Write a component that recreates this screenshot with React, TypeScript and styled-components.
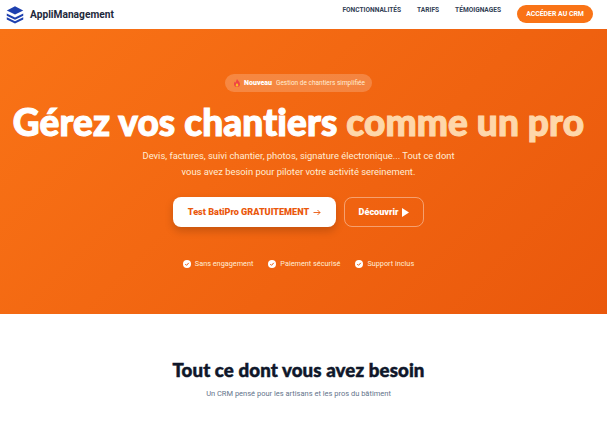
import React from 'react';
import styled, {createGlobalStyle} from 'styled-components';

const Global = createGlobalStyle`
  html, body { margin: 0; padding: 0; background: #fff; overflow: hidden; }
  body { font-family: Roboto, "Open Sans", sans-serif; }
`;

const Nav = styled.header`
  height: 29px;
  display: flex;
  align-items: flex-start;
  justify-content: space-between;
  padding: 0 14px 0 6px;
  background: #fff;
`;

const Brand = styled.div`
  display: flex;
  align-items: center;
  gap: 6px;
  height: 29px;
  font-size: 10.200px;
  font-weight: 700;
  color: #1e293b;
`;

const NavLinks = styled.nav`
  display: flex;
  align-items: flex-start;
  gap: 16px;
`;

const NavLink = styled.a`
  font-size: 6.600px;
  font-weight: 700;
  line-height: 10px;
  margin-top: 5px;
  color: #334155;
`;

const CrmButton = styled.a`
  margin-top: 5px;
  height: 18px;
  width: 76px;
  display: flex;
  align-items: center;
  justify-content: center;
  border-radius: 9px;
  background: #f97316;
  color: #fff;
  font-size: 6.900px;
  font-weight: 700;
`;

const Hero = styled.section`
  height: 285px;
  box-sizing: border-box;
  padding: 45px 10px 0 0;
  display: flex;
  flex-direction: column;
  align-items: center;
  background: linear-gradient(135deg, #f97316, #ea580c);
  color: #fff;
`;

const Badge = styled.div`
  height: 18px;
  padding: 0 7px 0 9px;
  display: flex;
  align-items: center;
  gap: 4px;
  border-radius: 9px;
  background: rgba(255, 255, 255, 0.2);
  font-size: 6.500px;
  color: #ffedd5;
  strong { font-size: 7px; font-weight: 900; color: #fff; }
`;

const Title = styled.h1`
  margin: 5px 0 0;
  font-family: Lato, sans-serif;
  font-size: 37px;
  line-height: 50px;
  font-weight: 900;
  white-space: nowrap;
  letter-spacing: 0.1px;
  -webkit-text-stroke: 1.100px currentColor;
  span { color: #fed7aa; }
`;

const Lead = styled.p`
  margin: 1px 0 0;
  text-align: center;
  font-size: 9.400px;
  line-height: 16px;
  color: #ffedd5;
`;

const Actions = styled.div`
  margin-top: 17px;
  display: flex;
  gap: 8px;
`;

const PrimaryButton = styled.a`
  width: 163px;
  height: 30px;
  display: flex;
  align-items: center;
  justify-content: center;
  gap: 4px;
  border-radius: 8px;
  background: #fff;
  color: #ea580c;
  font-size: 9.100px;
  font-weight: 900;
  box-shadow: 0 4px 8px rgba(0, 0, 0, 0.18);
`;

const GhostButton = styled.a`
  box-sizing: border-box;
  width: 80px;
  height: 30px;
  display: flex;
  align-items: center;
  justify-content: center;
  gap: 3px;
  border-radius: 8px;
  border: 1px solid rgba(255, 255, 255, 0.4);
  font-size: 9.100px;
  font-weight: 900;
`;

const Perks = styled.ul`
  list-style: none;
  margin: 32px 0 0;
  padding: 0;
  display: flex;
  gap: 15px;
`;

const Perk = styled.li`
  display: flex;
  align-items: center;
  gap: 4px;
  font-size: 7.300px;
  color: #ffedd5;
`;

const Features = styled.section`
  padding: 43px 10px 0 0;
  text-align: center;
`;

const FeaturesTitle = styled.h2`
  margin: 0;
  font-family: Lato, sans-serif;
  font-size: 18.700px;
  line-height: 26px;
  font-weight: 900;
  letter-spacing: 0.1px;
  -webkit-text-stroke: 0.5px currentColor;
  color: #0f172a;
`;

const FeaturesLead = styled.p`
  margin: 5px 0 0;
  font-size: 7.500px;
  line-height: 11px;
  color: #64748b;
`;

const Logo = () => (
  <svg width="18" height="19" viewBox="0 0 24 24" fill="#1e40af">
    <path d="M12 1 1 6.500 12 12l11-5.500z" />
    <path d="M1 10.500 12 16l11-5.500v3L12 19 1 13.500z" />
    <path d="M1 15.500 12 21l11-5.500v3L12 24 1 18.500z" />
  </svg>
);

const Check = () => (
  <svg width="8" height="8" viewBox="0 0 16 16">
    <circle cx="8" cy="8" r="8" fill="#fff" />
    <path d="M4.500 8.200 7 10.700l4.500-5" fill="none" stroke="#ea580c" strokeWidth="2" />
  </svg>
);

const Arrow = () => (
  <svg width="8" height="9" viewBox="0 0 16 16" fill="none" stroke="#ea580c" strokeWidth="1.800">
    <path d="M1 8h13M9 3l5 5-5 5" />
  </svg>
);

const Play = () => (
  <svg width="8" height="9" viewBox="0 0 8 9" fill="#fff">
    <path d="M1 0v9l7-4.500z" />
  </svg>
);

const Flame = () => (
  <svg width="6" height="8" viewBox="0 0 6 8">
    <path d="M3 0c.5 1.500 3 2.500 3 5a3 3 0 0 1-6 0c0-1 .5-2 1-2.500 0 1 .5 1 .8 1C2 2.500 2.500 1 3 0z" fill="#ef4444" />
    <path d="M3 4c.3.800 1.300 1.200 1.300 2.200a1.300 1.300 0 0 1-2.600 0C1.700 5.400 2.700 4.800 3 4z" fill="#fbbf24" />
  </svg>
);

export default function App() {
  return (
    <>
      <Global />
      <Nav>
        <Brand>
          <Logo />
          AppliManagement
        </Brand>
        <NavLinks>
          <NavLink>FONCTIONNALITÉS</NavLink>
          <NavLink>TARIFS</NavLink>
          <NavLink>TÉMOIGNAGES</NavLink>
          <CrmButton>ACCÉDER AU CRM</CrmButton>
        </NavLinks>
      </Nav>
      <Hero>
        <Badge>
          <Flame />
          <strong>Nouveau</strong> Gestion de chantiers simplifiée
        </Badge>
        <Title>
          Gérez vos chantiers <span>comme un pro</span>
        </Title>
        <Lead>
          Devis, factures, suivi chantier, photos, signature électronique... Tout ce dont
          <br />
          vous avez besoin pour piloter votre activité sereinement.
        </Lead>
        <Actions>
          <PrimaryButton>
            Test BatiPro GRATUITEMENT <Arrow />
          </PrimaryButton>
          <GhostButton>
            Découvrir <Play />
          </GhostButton>
        </Actions>
        <Perks>
          <Perk><Check /> Sans engagement</Perk>
          <Perk><Check /> Paiement sécurisé</Perk>
          <Perk><Check /> Support inclus</Perk>
        </Perks>
      </Hero>
      <Features>
        <FeaturesTitle>Tout ce dont vous avez besoin</FeaturesTitle>
        <FeaturesLead>Un CRM pensé pour les artisans et les pros du bâtiment</FeaturesLead>
      </Features>
    </>
  );
}
